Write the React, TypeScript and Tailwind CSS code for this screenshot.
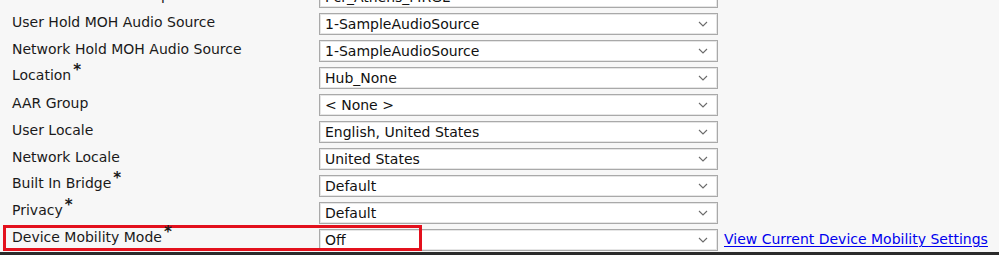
import { ReactNode } from 'react'

interface Row {
  label: string
  value: string
  required?: boolean
  extra?: ReactNode
  highlight?: boolean
}

const rows: Row[] = [
  { label: 'Media Resource Group List', value: 'Pcr_Athens_MRGL' },
  { label: 'User Hold MOH Audio Source', value: '1-SampleAudioSource' },
  { label: 'Network Hold MOH Audio Source', value: '1-SampleAudioSource' },
  { label: 'Location', value: 'Hub_None', required: true },
  { label: 'AAR Group', value: '< None >' },
  { label: 'User Locale', value: 'English, United States' },
  { label: 'Network Locale', value: 'United States' },
  { label: 'Built In Bridge', value: 'Default', required: true },
  { label: 'Privacy', value: 'Default', required: true },
  {
    label: 'Device Mobility Mode',
    value: 'Off',
    required: true,
    highlight: true,
    extra: (
      <a href="#" className="ml-[6px] text-[#0000ee] underline decoration-1 underline-offset-2 whitespace-nowrap">
        View Current Device Mobility Settings
      </a>
    ),
  },
]

function Chevron() {
  return (
    <svg width="10" height="6" viewBox="0 0 10 6" className="shrink-0">
      <path d="M1 1 L5 5 L9 1" fill="none" stroke="#6b6b6b" strokeWidth="1.1" />
    </svg>
  )
}

function SelectBox({ value }: { value: string }) {
  return (
    <div className="w-[399px] h-[22px] flex items-center justify-between bg-white border border-[#a9a9a9] shadow-[inset_0_0_0_1px_#e6e6e6] pl-[5px] pr-[9px] shrink-0">
      <span className="text-[#111] leading-none">{value}</span>
      <Chevron />
    </div>
  )
}

export default function App() {
  return (
    <div
      className="w-[999px] h-[255px] overflow-hidden bg-[#f7f7f7] text-[14px] text-[#1a1a1a] flex flex-col border-b-[3px] border-[#2b2b2b]"
      style={{ fontFamily: '"DejaVu Sans", Verdana, sans-serif' }}
    >
      <div className="flex flex-col mt-[-17px]">
        {rows.map((r) => (
          <div key={r.label} className="relative flex items-center h-[27px]">
            {r.highlight && (
              <div className="absolute left-[3px] -top-[1px] w-[419px] h-[26px] border-[3px] border-[#e3111d] pointer-events-none" />
            )}
            <div className="w-[319px] pl-[12px] shrink-0 -mt-[4px] whitespace-nowrap leading-none">
              {r.label}
              {r.required && (
                <span className="relative -top-[5px] ml-[2px] text-[15px] font-bold">*</span>
              )}
            </div>
            <SelectBox value={r.value} />
            {r.extra}
          </div>
        ))}
      </div>
    </div>
  )
}
